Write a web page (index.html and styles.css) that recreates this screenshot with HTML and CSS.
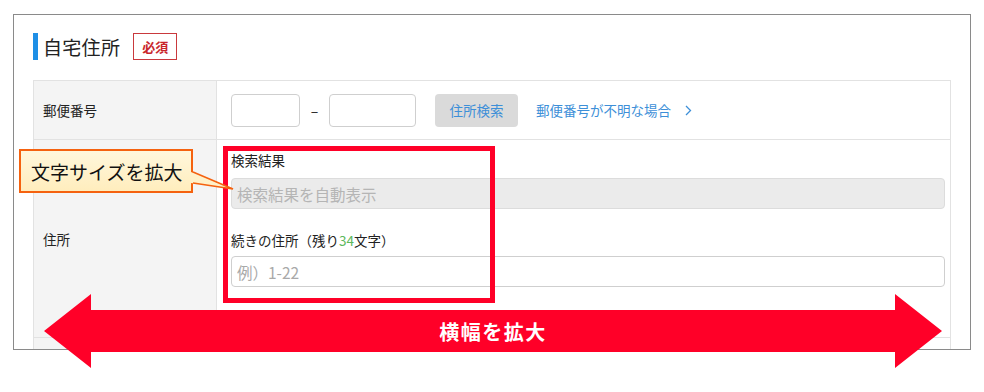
FILE: index.html
```html
<!DOCTYPE html>
<html lang="ja">
<head>
<meta charset="utf-8">
<title>自宅住所</title>
<link rel="stylesheet" href="styles.css">
</head>
<body>
<div class="frame">
  <div class="heading">
    <span class="bar"></span>
    <h2 class="title">自宅住所</h2>
    <span class="badge">必須</span>
  </div>
  <div class="table">
    <div class="row row-zip">
      <div class="label">郵便番号</div>
      <div class="cell zip-cell">
        <input class="box zip1" type="text">
        <span class="dash">–</span>
        <input class="box zip2" type="text">
        <button class="search-btn" type="button">住所検索</button>
        <a class="zip-link" href="#">郵便番号が不明な場合<svg class="chev" width="7" height="11" viewBox="0 0 7 11"><path d="M1 1 L5.5 5.5 L1 10" fill="none" stroke="#3d8fd8" stroke-width="1.3"/></svg></a>
      </div>
    </div>
    <div class="row row-addr">
      <div class="label">住所</div>
      <div class="cell addr-cell">
        <div class="field-label">検索結果</div>
        <input class="box wide disabled" type="text" placeholder="検索結果を自動表示" disabled>
        <div class="field-label second">続きの住所（残り<span class="count">34</span>文字）</div>
        <input class="box wide" type="text" placeholder="例）1-22">
        <div class="note">※番地・建物名・部屋番号などをご入力ください</div>
      </div>
    </div>
    <div class="row row-next">
      <div class="label"></div>
      <div class="cell"></div>
    </div>
  </div>
</div>

<div class="redbox"></div>

<div class="callout">文字サイズを拡大</div>
<svg class="tail" width="46" height="24" viewBox="0 0 46 24">
  <polygon points="0,2 42,19 0,13" fill="#fff1c9"/>
  <polyline points="2,2 42,19 2,13" fill="none" stroke="#f5620f" stroke-width="1.6" stroke-linejoin="miter"/>
</svg>

<svg class="arrow" width="898" height="74" viewBox="0 0 898 74">
  <polygon points="0,37 47,0 47,16 851,16 851,0 898,37 851,74 851,58 47,58 47,74" fill="#ff0028"/>
</svg>
<div class="arrow-text">横幅を拡大</div>
</body>
</html>
```

FILE: styles.css
```css
* { box-sizing: border-box; }

body {
  margin: 0;
  font-family: "Noto Sans CJK JP", "Noto Sans", sans-serif;
  color: #222;
  background: #fff;
}

.frame {
  margin: 14px 0 0 13px;
  width: 958px;
  height: 336px;
  border: 1px solid #8a8a8a;
  padding: 18px 19px 0 19px;
  overflow: hidden;
}

.heading {
  display: flex;
  align-items: center;
  height: 27px;
}

.bar {
  width: 5px;
  height: 27px;
  background: #1e8fe6;
  margin-right: 5px;
}

.title {
  margin: 0;
  font-size: 19px;
  font-weight: normal;
  line-height: 27px;
  color: #222;
  letter-spacing: 0.3px;
}

.badge {
  margin-left: 13px;
  width: 44px;
  height: 27px;
  border: 1px solid #c9393d;
  color: #c9262b;
  font-size: 13px;
  font-weight: bold;
  display: flex;
  align-items: center;
  justify-content: center;
}

.table {
  margin-top: 20px;
  border: 1px solid #e2e2e2;
  border-bottom: none;
}

.row {
  display: grid;
  grid-template-columns: 183px 1fr;
  border-top: 1px solid #e2e2e2;
}

.row:first-child { border-top: none; }

.label {
  background: #f4f4f4;
  border-right: 1px solid #e2e2e2;
  padding-left: 9px;
  font-size: 13.5px;
  display: flex;
  align-items: center;
  color: #222;
}

.cell {
  padding: 0 5px 0 14px;
}

.row-zip { height: 58px; }

.zip-cell {
  display: flex;
  align-items: center;
}

.box {
  font-family: inherit;
  border: 1px solid #cfcfcf;
  border-radius: 4px;
  background: #fff;
  outline: none;
  padding: 0 6px;
  margin: 0;
}

.zip1 { width: 69px; height: 33px; }
.zip2 { width: 87px; height: 33px; }

.dash {
  width: 29px;
  text-align: center;
  font-size: 14px;
  color: #222;
}

.search-btn {
  margin-left: 19px;
  width: 83px;
  height: 33px;
  border: none;
  border-radius: 4px;
  background: #dadada;
  color: #3d8fd8;
  font-family: inherit;
  font-size: 13.5px;
  padding: 0;
}

.zip-link {
  margin-left: 18px;
  color: #3d8fd8;
  font-size: 13.5px;
  text-decoration: none;
  display: flex;
  align-items: center;
}

.chev { margin-left: 14px; }

.row-addr { height: 198px; }

.addr-cell { padding-top: 10px; }

.field-label {
  font-size: 13.5px;
  line-height: 20px;
  color: #222;
}

.field-label.second { margin-top: 21px; }

.count { color: #5cb85c; }

.wide {
  display: block;
  width: 100%;
  height: 31px;
  font-size: 15.5px;
  padding-left: 5px;
}

.addr-cell > .wide:nth-of-type(1) { margin-top: 8px; }
.field-label.second + .wide { margin-top: 6px; }

.disabled {
  background: #ebebeb;
  border-color: #dcdcdc;
}

.wide::placeholder { color: #a9a9a9; opacity: 1; }
.disabled::placeholder { color: #b5b5b5; }

.note {
  margin-top: 20px;
  font-size: 12px;
  color: #aaa;
}

.row-next { height: 20px; }

.redbox {
  position: absolute;
  left: 223px;
  top: 146px;
  width: 272px;
  height: 157px;
  border: 5px solid #ff0028;
}

.callout {
  position: absolute;
  left: 19px;
  top: 149px;
  width: 174px;
  height: 44px;
  border: 2px solid #f5620f;
  background: linear-gradient(#fff7dc, #ffedbd);
  font-size: 19px;
  color: #111;
  padding-left: 10px;
  display: flex;
  align-items: center;
}

.tail {
  position: absolute;
  left: 191px;
  top: 170px;
}

.arrow {
  position: absolute;
  left: 44px;
  top: 294px;
}

.arrow-text {
  position: absolute;
  left: 44px;
  top: 310px;
  width: 898px;
  height: 42px;
  display: flex;
  align-items: center;
  justify-content: center;
  color: #fff;
  font-size: 20px;
  font-weight: bold;
  letter-spacing: 1.5px;
}
```
